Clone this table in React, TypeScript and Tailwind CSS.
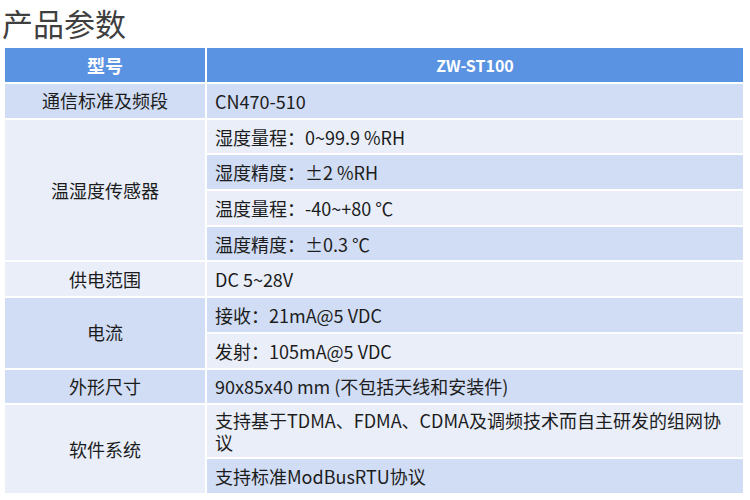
import React from 'react';

type Cell = { text: string; dark: boolean; tall?: boolean };
type Group = { label: string; rows: Cell[] };

const groups: Group[] = [
  { label: '通信标准及频段', rows: [{ text: 'CN470-510', dark: true }] },
  {
    label: '温湿度传感器',
    rows: [
      { text: '湿度量程：0~99.9 %RH', dark: false },
      { text: '湿度精度：±2 %RH', dark: true },
      { text: '温度量程：-40~+80 ℃', dark: false },
      { text: '温度精度：±0.3 ℃', dark: true },
    ],
  },
  { label: '供电范围', rows: [{ text: 'DC 5~28V', dark: false }] },
  {
    label: '电流',
    rows: [
      { text: '接收：21mA@5 VDC', dark: true },
      { text: '发射：105mA@5 VDC', dark: false },
    ],
  },
  { label: '外形尺寸', rows: [{ text: '90x85x40 mm (不包括天线和安装件)', dark: true }] },
  {
    label: '软件系统',
    rows: [
      { text: '支持基于TDMA、FDMA、CDMA及调频技术而自主研发的组网协议', dark: false, tall: true },
      { text: '支持标准ModBusRTU协议', dark: true },
    ],
  },
];

const font = { fontFamily: '"Noto Sans CJK SC", "Noto Sans", sans-serif' };

export default function App() {
  return (
    <div className="w-[750px] h-[500px] bg-white overflow-hidden" style={font}>
      <div className="h-[46px] pl-[2px] flex items-center">
        <h1 className="text-[31px] leading-[44px] text-[#3f3f3f] font-normal">产品参数</h1>
      </div>
      <table className="ml-[3px] border-separate border-spacing-[2px] text-[18px] text-[#1c1c1c]">
        <thead>
          <tr className="h-[34px]">
            <th className="w-[200px] bg-[#5b93e3] text-white font-bold text-[18px] leading-none">型号</th>
            <th className="w-[536px] bg-[#5b93e3] text-white font-bold text-[16px] leading-none">ZW-ST100</th>
          </tr>
        </thead>
        <tbody>
          {groups.map((g) =>
            g.rows.map((r, i) => (
              <tr key={g.label + i} className={r.tall ? 'h-[52px]' : 'h-[33.7px]'}>
                {i === 0 && (
                  <td
                    rowSpan={g.rows.length}
                    className={`text-center align-middle ${r.dark ? 'bg-[#d1ddf4]' : 'bg-[#e9eef9]'}`}
                  >
                    {g.label}
                  </td>
                )}
                <td
                  className={`pl-[8px] pr-[14px] leading-[22px] align-middle ${r.dark ? 'bg-[#d1ddf4]' : 'bg-[#e9eef9]'}`}
                >
                  {r.text}
                </td>
              </tr>
            ))
          )}
        </tbody>
      </table>
    </div>
  );
}
